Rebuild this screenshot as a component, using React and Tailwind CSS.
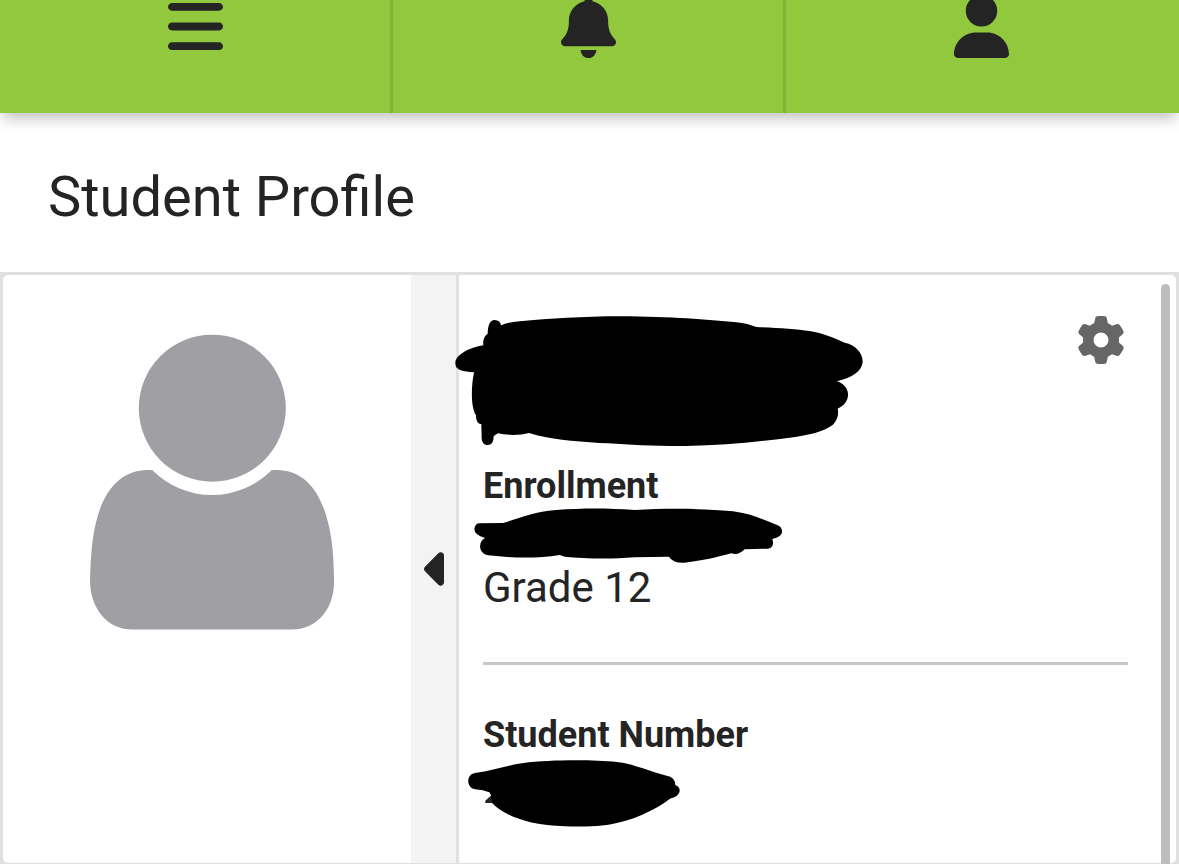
import { FaBars, FaBell, FaGear, FaUser } from 'react-icons/fa6'

const NAV_ITEMS = [
  { key: 'menu', label: 'Menu', icon: FaBars },
  { key: 'notifications', label: 'Notifications', icon: FaBell },
  { key: 'account', label: 'Account', icon: FaUser },
]

function Avatar() {
  return (
    <svg viewBox="90 334 245 296" className="w-[245px] h-[296px]" fill="#a09fa4" role="img" aria-label="Student photo">
      <circle cx="212.300" cy="408.200" r="73.500" />
      <path d="M152.500 470.300A84 84 0 0 0 271.500 470.300C300 468 317 486 326 515C332 535 334 555 334 582C334 608 318 629.500 292 629.500H132C107 629.500 90 608 90 580C91 553 92 535 98 515C107 485 126 468 152.500 470.300Z" />
    </svg>
  )
}

function NameScribble() {
  return (
    <svg viewBox="46 47 1227 390" className="block w-[409px] h-[130px] -ml-[28px]" aria-hidden="true">
      <path d="M185 75Q200 66 240 63C330 55 430 48 540 48C700 49 800 58 890 66Q925 70 950 80C1010 82 1070 86 1110 92C1150 98 1185 114 1215 127C1250 134 1270 160 1269 185C1266 215 1235 232 1192 243C1215 250 1226 268 1225 285C1224 303 1212 318 1194 325Q1200 350 1180 373C1150 395 1110 403 1050 412C950 425 850 435 740 437C620 438 560 431 480 428C400 422 330 418 268 398C240 406 200 405 175 399Q165 405 162 408L161 418C158 440 128 440 126 415L125 372Q108 368 109 345C92 320 95 255 103 216C70 212 47 212 47 188C48 162 90 142 131 135Q128 110 144 100C145 75 150 60 165 59Q182 60 184 75Z" />
    </svg>
  )
}

function SchoolScribble() {
  return (
    <svg viewBox="103 624 927 165" className="block w-[309px] h-[55px] -ml-[9px]" aria-hidden="true">
      <path d="M118 670L190 669C250 652 280 635 350 630C430 624 500 624 585 630C680 624 780 624 880 634C930 640 970 658 1010 674C1032 680 1034 706 1010 713L998 717Q1006 742 985 746L915 748Q895 768 875 760C830 772 790 782 735 788Q700 790 688 770L585 772C500 779 430 775 375 770L360 765C290 776 220 774 145 766C115 760 115 725 136 714Q104 705 104 687Q106 672 118 670Z" />
    </svg>
  )
}

function NumberScribble() {
  return (
    <svg viewBox="54 179 636 201" className="block w-[212px] h-[67px] -ml-[15px]" aria-hidden="true">
      <path d="M75 218C130 210 170 195 220 188C300 178 430 178 500 185C560 192 600 215 650 226Q675 230 676 254Q690 260 689 272Q688 288 660 295C620 325 570 350 510 366C460 380 400 380 330 377C240 375 160 345 127 309L122 298L123 284L118 276Q100 268 75 267C48 262 48 222 75 218Z" />
      <path d="M106 308V301L122 286L127 308Z" fill="#242424" />
    </svg>
  )
}

export default function App() {
  return (
    <div className="min-h-screen flex flex-col bg-white text-[#242424] font-[Roboto,sans-serif]">
      <header className="relative bg-[#92c83e] shadow-[0_8px_14px_-3px_rgba(0,0,0,0.26)]">
        <nav className="grid grid-cols-3 h-[113px]">
          {NAV_ITEMS.map(({ key, label, icon: Icon }) => (
            <button
              key={key}
              aria-label={label}
              className="flex justify-center items-start overflow-hidden border-r-3 border-[#80b535] last:border-transparent"
            >
              <Icon className="w-[55px] h-[63px] -mt-[5px]" />
            </button>
          ))}
        </nav>
      </header>

      <h1 className="px-12 pt-[52px] pb-[43px] text-[56px] leading-[64px]">Student Profile</h1>

      <main className="flex-1 flex bg-[#e0e0e0] px-[3px] pt-[3px] pb-px">
        <div className="relative flex-1 flex bg-white rounded-[5px]">
          <div className="w-[408px] shrink-0 pl-[87px] pt-[59px]">
            <Avatar />
          </div>

          <button
            aria-label="Collapse photo"
            className="w-12 shrink-0 flex items-center justify-center bg-[#f3f3f3] border-r-3 border-[#e0e0e0]"
          >
            <svg viewBox="0 96 192 320" className="w-5 h-[34px]" fill="currentColor">
              <path d="M9.400 278.600c-12.500-12.500-12.500-32.800 0-45.300l128-128c9.200-9.200 22.900-11.900 34.900-6.900s19.800 16.600 19.800 29.600v256c0 12.900-7.800 24.600-19.800 29.600s-25.700 2.200-34.900-6.900l-128-128z" />
            </svg>
          </button>

          <div className="relative flex-1 pl-6 pr-12 pt-[41px]">
            <div className="flex items-start justify-between">
              <NameScribble />
              <button aria-label="Settings" className="mr-[3px] text-[#666666]">
                <FaGear className="size-12" />
              </button>
            </div>

            <section>
              <h2 className="mt-5 mb-[2px] text-[36px] leading-10 font-bold">Enrollment</h2>
              <SchoolScribble />
              <p className="mt-px text-[42px] leading-12">Grade 12</p>
            </section>

            <hr className="my-[50px] border-t-3 border-[#c8c8c8]" />

            <section>
              <h2 className="mb-[5px] text-[36px] leading-10 font-bold">Student Number</h2>
              <NumberScribble />
            </section>
          </div>

          <div className="absolute top-[9px] -bottom-px right-[6px] w-[9px] rounded-t-full bg-[#bdbdbd]" />
        </div>
      </main>
    </div>
  )
}
